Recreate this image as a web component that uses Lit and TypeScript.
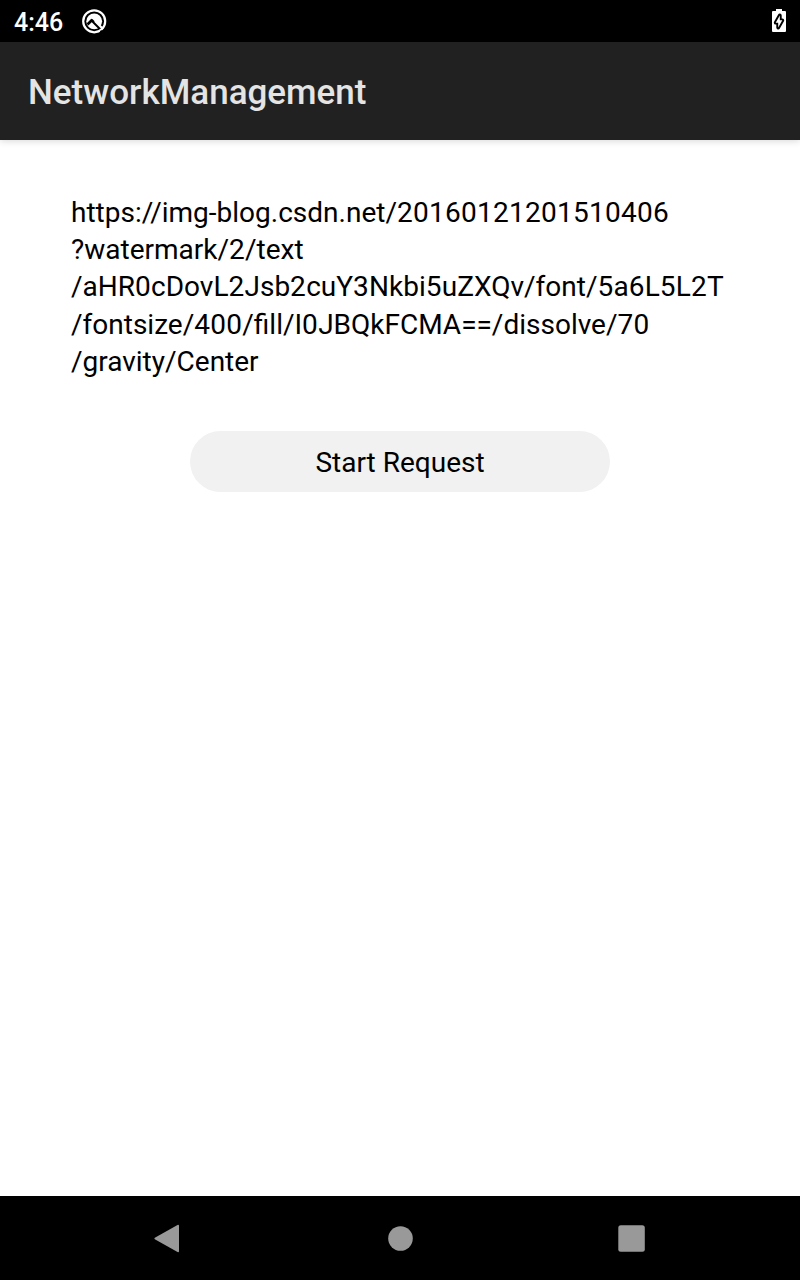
import { LitElement, html, css } from "lit";
import { customElement } from "lit/decorators.js";

const LINES = [
  "https://img-blog.csdn.net/20160121201510406",
  "?watermark/2/text",
  "/aHR0cDovL2Jsb2cuY3Nkbi5uZXQv/font/5a6L5L2T",
  "/fontsize/400/fill/I0JBQkFCMA==/dissolve/70",
  "/gravity/Center",
];

// Digits are set slightly wider than the letters around them.
const spaced = (text: string) =>
  text
    .split(/(\d+)/)
    .map((part) => (/^\d/.test(part) ? html`<span class="digits">${part}</span>` : part));

@customElement("app-root")
export class AppRoot extends LitElement {
  static styles = css`
    :host {
      display: flex;
      flex-direction: column;
      width: 800px;
      height: 1280px;
      background: #fff;
      font-family: Roboto, sans-serif;
      color: #000;
    }
    svg { display: block; }
    .status {
      box-sizing: border-box;
      height: 42px;
      flex: none;
      display: flex;
      align-items: center;
      padding: 0 8px 0 14px;
      background: #000;
      color: #fff;
    }
    .clock {
      width: 66px;
      font-size: 25px;
      font-weight: 500;
      line-height: 42px;
      padding-top: 3px;
    }
    .battery { margin-left: auto; }
    .bar {
      height: 98px;
      flex: none;
      padding-left: 28px;
      background: #212121;
      box-shadow: 0 1px 7px rgba(0, 0, 0, 0.16);
    }
    h1 {
      margin: 0;
      font-size: 35px;
      font-weight: 500;
      line-height: 102px;
      color: #e4e4e4;
    }
    main {
      flex: 1;
      display: flex;
      flex-direction: column;
      align-items: center;
    }
    .url {
      align-self: flex-start;
      margin: 54px 0 0 71px;
      font-size: 28px;
      line-height: 37.2px;
      white-space: nowrap;
    }
    .digits { letter-spacing: 0.27px; }
    button {
      width: 420px;
      height: 61px;
      margin: 51px 0 0;
      padding: 2px 0 0;
      border: 0;
      border-radius: 31px;
      background: #f1f1f1;
      color: #000;
      font: 28px Roboto, sans-serif;
    }
    nav {
      height: 84px;
      flex: none;
      background: #000;
    }
  `;

  render() {
    return html`
      <header class="status">
        <span class="clock">4:46</span>
        <svg width="28" height="28" viewBox="0 0 28 28" fill="none">
          <circle cx="14.200" cy="14.300" r="11" stroke="#fff" stroke-width="2.200" />
          <circle cx="14.200" cy="14.300" r="7.900" fill="#fff" />
          <path d="M7.500 17.500L11.700 13.300L19.500 21" stroke="#000" stroke-width="2.700" stroke-linejoin="round" />
          <path d="M15 14L23 22" stroke="#fff" stroke-width="2.300" />
          <path d="M20.500 23.800L23 26.300" stroke="#000" stroke-width="2" />
        </svg>
        <svg class="battery" width="26" height="42" viewBox="0 0 26 42">
          <path fill="#fff" d="M10 9h6v2h3q1 0 1 1v19q0 1-1 1H7q-1 0-1-1V12q0-1 1-1h3z" />
          <path
            fill="#fff" stroke="#000" stroke-width="3.800" paint-order="stroke" stroke-linejoin="round"
            d="M13.800 15.500V20.300H16.300L12.200 27.500V22.700H9.700Z"
          />
        </svg>
      </header>
      <div class="bar"><h1>NetworkManagement</h1></div>
      <main>
        <div class="url">${LINES.map((line) => html`<div>${spaced(line)}</div>`)}</div>
        <button>Start Request</button>
      </main>
      <nav>
        <svg width="800" height="84" viewBox="0 0 800 84" fill="#999">
          <path d="M154.800 43.300Q153.800 42.500 154.800 41.700L177.500 28.900Q179 28.300 179 30V55Q179 56.700 177.500 56.100Z" />
          <circle cx="400.500" cy="42.500" r="12.300" />
          <rect x="618.300" y="29.200" width="26.500" height="26.500" rx="2.500" />
        </svg>
      </nav>
    `;
  }
}
